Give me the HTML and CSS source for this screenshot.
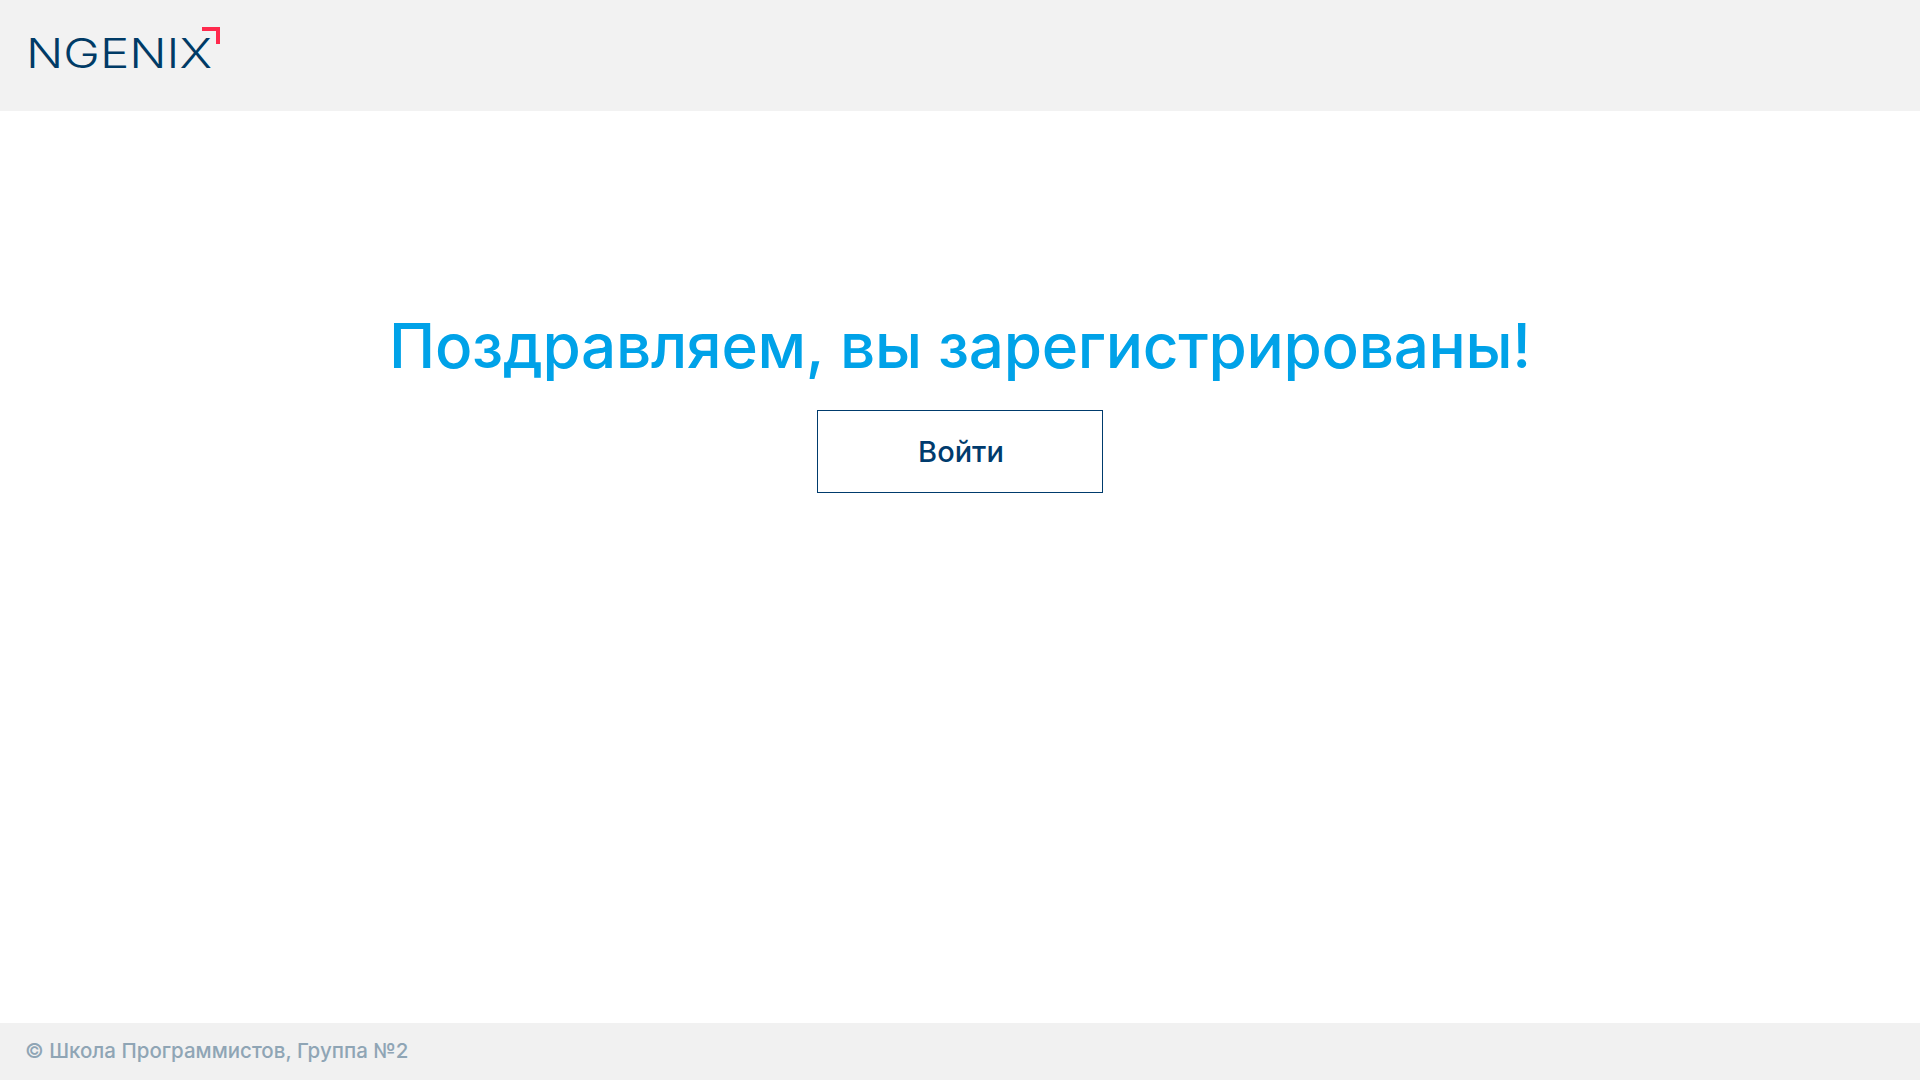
FILE: index.html
```html
<!DOCTYPE html>
<html lang="ru">
<head>
  <meta charset="UTF-8">
  <meta name="viewport" content="width=device-width, initial-scale=1.0">
  <title>Регистрация</title>
  <link rel="stylesheet" href="styles.css">
</head>
<body>
  <div class="header">
    <a class="logo" href="#">
      <svg width="194" height="56" viewBox="0 0 194 56">
        <text class="logo-text" x="0" y="41" textLength="186" lengthAdjust="spacingAndGlyphs">NGENIX</text>
        <path d="M176 0H194V17H190V4H176Z" fill="#ff2a4d"/>
      </svg>
    </a>
  </div>

  <div class="content">
    <h1 class="title">Поздравляем, вы зарегистрированы!</h1>
    <a class="btn" href="#">Войти</a>
  </div>

  <div class="footer">© Школа Программистов, Группа №2</div>
</body>
</html>
```

FILE: styles.css
```css
body {
  display: flex;
  flex-direction: column;
  height: 100vh;
  margin: 0;
  font-family: "Inter", "Noto Sans", sans-serif;
  background-color: #fff;
}

/* header */
.header {
  height: 111px;
  flex-shrink: 0;
  padding: 27px 0 0 26px;
  box-sizing: border-box;
  background-color: #f2f2f2;
}

.logo {
  display: block;
  width: 194px;
  height: 56px;
}

.logo-text {
  font-size: 41px;
  font-weight: 350;
  fill: #003b66;
}

/* content */
.content {
  flex: 1;
  display: flex;
  flex-direction: column;
  align-items: center;
  padding-top: 196px;
}

.title {
  margin: 0 0 25px;
  font-size: 62px;
  font-weight: 500;
  line-height: 78px;
  letter-spacing: -0.3px;
  color: #00a2e8;
}

.btn {
  display: flex;
  align-items: center;
  justify-content: center;
  width: 286px;
  height: 83px;
  box-sizing: border-box;
  padding-left: 2px;
  border: 1px solid #003b6d;
  font-size: 29px;
  font-weight: 500;
  color: #003b6d;
  text-decoration: none;
}

/* footer */
.footer {
  height: 57px;
  flex-shrink: 0;
  display: flex;
  align-items: center;
  padding: 0 0 3px 25px;
  box-sizing: border-box;
  background-color: #f1f1f1;
  font-size: 20.5px;
  font-weight: 500;
  color: #8fa5b5;
}
```
